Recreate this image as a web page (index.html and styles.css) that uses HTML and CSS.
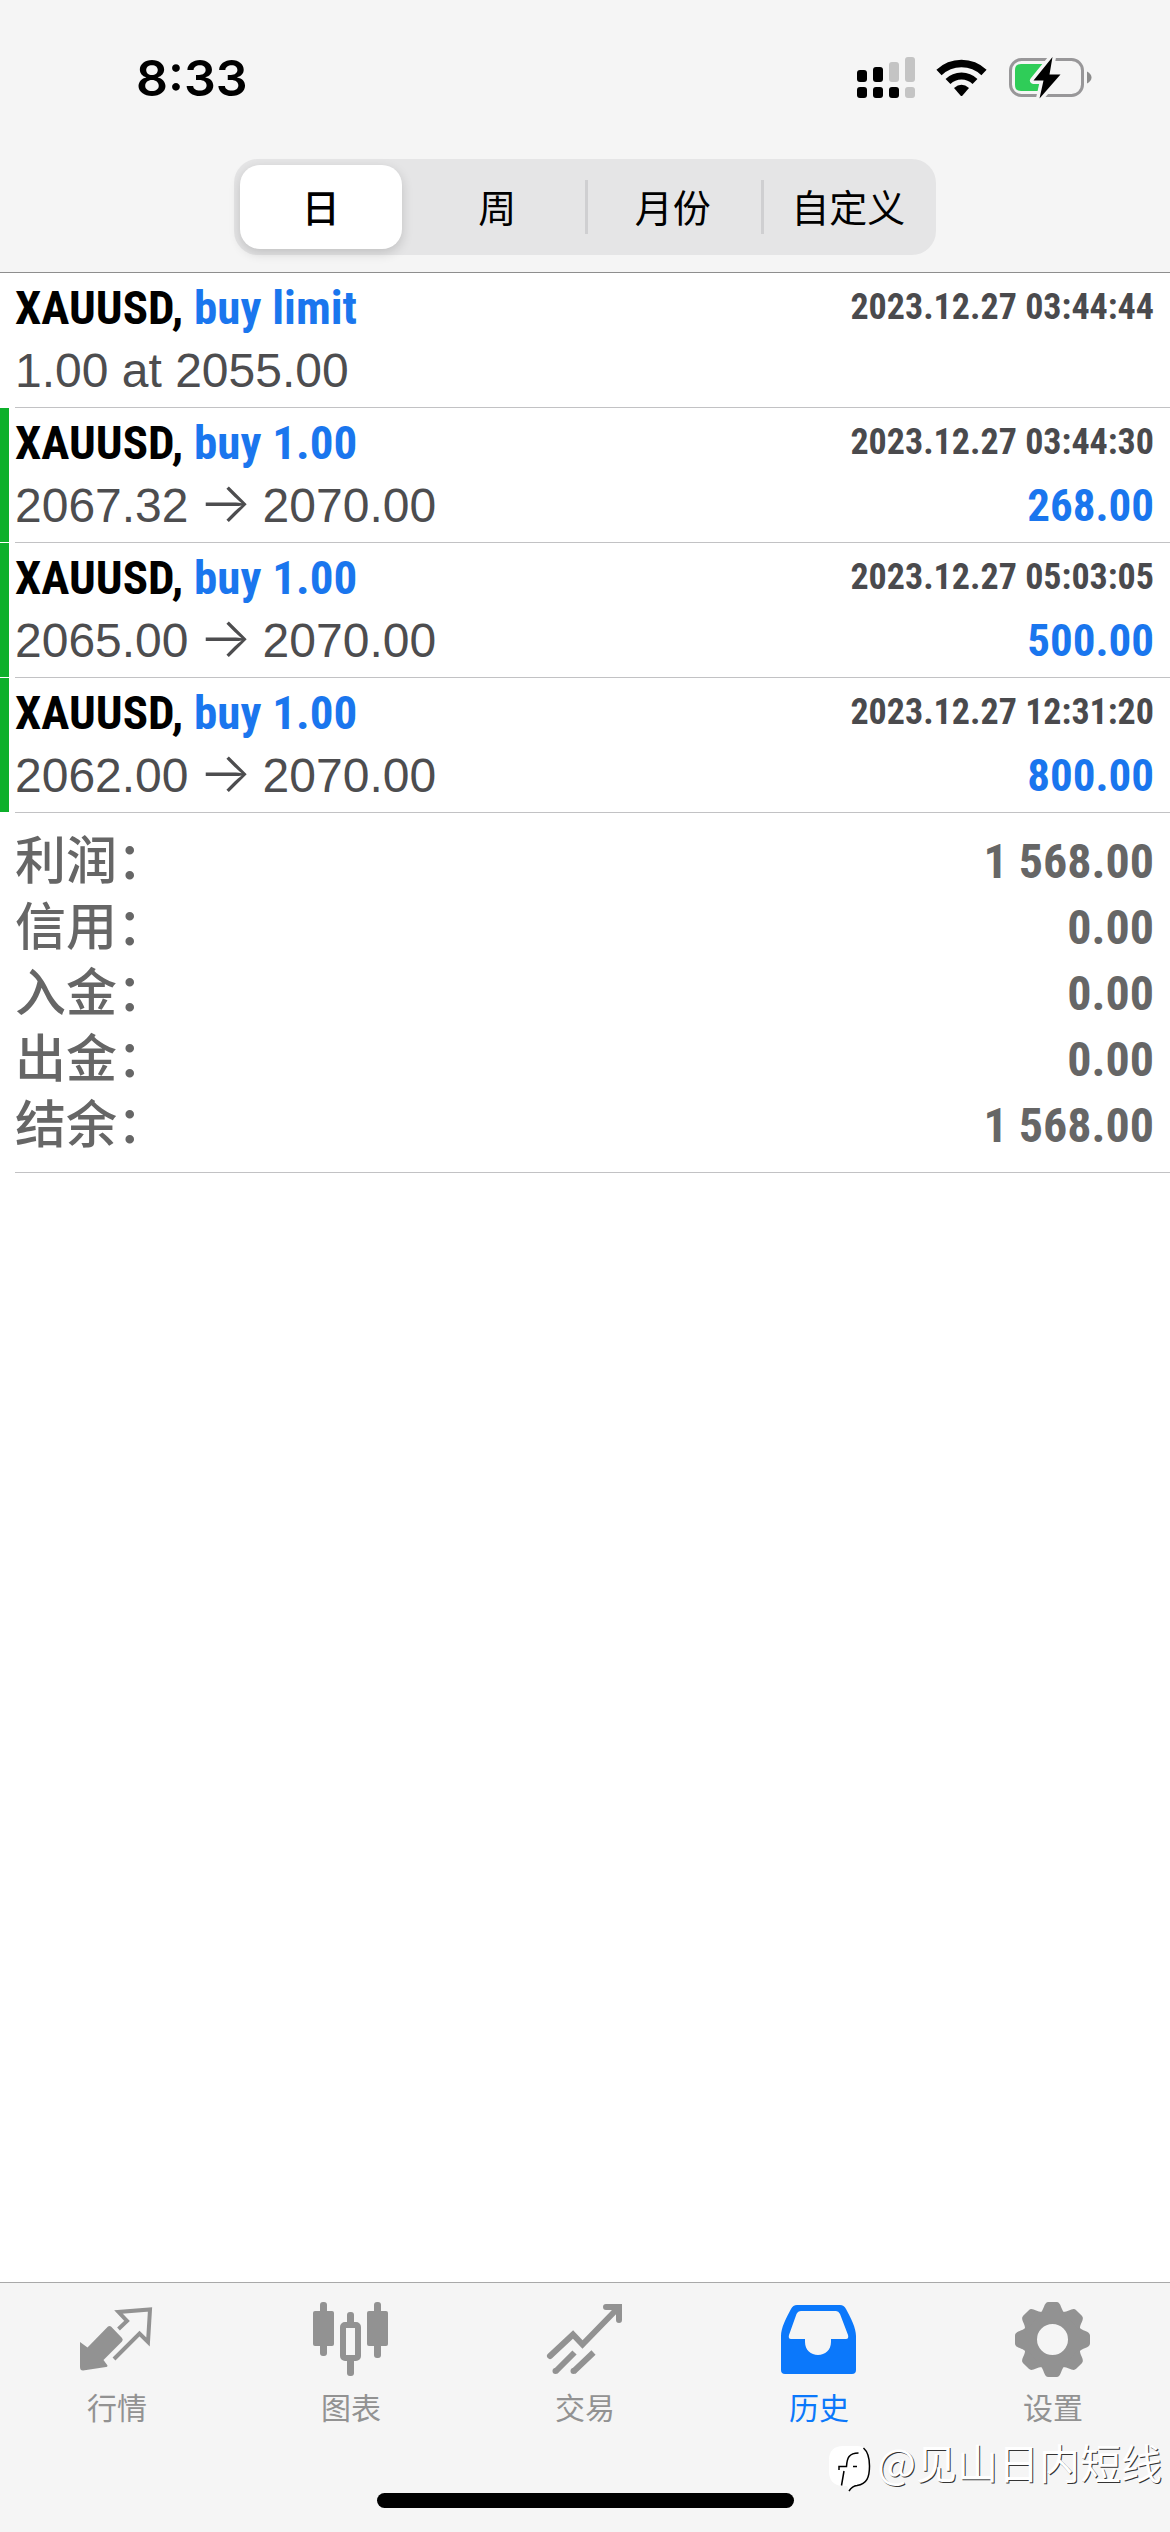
FILE: index.html
```html
<!DOCTYPE html>
<html lang="zh-CN">
<head>
  <meta charset="UTF-8">
  <meta name="viewport" content="width=device-width, initial-scale=1">
  <title>历史</title>
  <link rel="stylesheet" href="styles.css">
</head>
<body>

<header class="header">
  <div class="status">
    <span class="time">8:33</span>
    <div class="status-icons">
      <svg width="60" height="42" viewBox="0 0 60 42">
        <rect x="1" y="13" width="10" height="12" rx="3"/>
        <rect x="17" y="10" width="10" height="15" rx="3"/>
        <rect x="33" y="5" width="10" height="20" rx="3" fill="#c4c4c4"/>
        <rect x="49" y="0" width="10" height="25" rx="3" fill="#c4c4c4"/>
        <rect x="1" y="30" width="10" height="11" rx="3"/>
        <rect x="17" y="30" width="10" height="11" rx="3"/>
        <rect x="33" y="30" width="10" height="11" rx="3"/>
        <rect x="49" y="30" width="10" height="11" rx="3" fill="#c4c4c4"/>
      </svg>
      <svg width="52" height="40" viewBox="0 0 52 40">
        <path d="M3 14.5A32.6 32.6 0 0 1 48 14.5" fill="none" stroke="#000" stroke-width="7.5"/>
        <path d="M12 23.5A19.3 19.3 0 0 1 39 23.5" fill="none" stroke="#000" stroke-width="7"/>
        <path d="M18 30Q25.5 23.500 33 30L26.500 37.500Q25.500 38.500 24.500 37.500Z"/>
      </svg>
      <svg width="84" height="44" viewBox="0 0 84 44">
        <rect x="2.500" y="3.500" width="72" height="36" rx="11" fill="none" stroke="#989799" stroke-width="3"/>
        <path d="M79 15.500Q83.500 18 83.500 21.500T79 27.500Z" fill="#8c8c8c"/>
        <path d="M13 8H38L30 35H13Q7 35 7 29V14Q7 8 13 8Z" fill="#2fcd58"/>
        <path d="M44.500 1L25.500 24.500H35.500L31.500 42.500L52.500 18.500H41.500Z" fill="#000" stroke="#f5f5f5" stroke-width="7" stroke-linejoin="round" paint-order="stroke"/>
      </svg>
    </div>
  </div>
  <nav class="segmented">
    <button class="segment active" type="button">日</button>
    <button class="segment" type="button">周</button>
    <button class="segment divided" type="button">月份</button>
    <button class="segment divided" type="button">自定义</button>
  </nav>
</header>

<main class="content">
  <ul class="deals">
    <li class="deal">
      <div class="deal-body">
        <div class="line">
          <span class="symbol">XAUUSD, <span class="side">buy limit</span></span>
          <time class="date">2023.12.27 03:44:44</time>
        </div>
        <div class="line">
          <span class="price">1.00 at 2055.00</span>
        </div>
      </div>
    </li>
    <li class="deal closed">
      <div class="deal-body">
        <div class="line">
          <span class="symbol">XAUUSD, <span class="side">buy 1.00</span></span>
          <time class="date">2023.12.27 03:44:30</time>
        </div>
        <div class="line">
          <span class="price">2067.32 <span class="arrow">→</span> 2070.00</span>
          <span class="profit">268.00</span>
        </div>
      </div>
    </li>
    <li class="deal closed">
      <div class="deal-body">
        <div class="line">
          <span class="symbol">XAUUSD, <span class="side">buy 1.00</span></span>
          <time class="date">2023.12.27 05:03:05</time>
        </div>
        <div class="line">
          <span class="price">2065.00 <span class="arrow">→</span> 2070.00</span>
          <span class="profit">500.00</span>
        </div>
      </div>
    </li>
    <li class="deal closed">
      <div class="deal-body">
        <div class="line">
          <span class="symbol">XAUUSD, <span class="side">buy 1.00</span></span>
          <time class="date">2023.12.27 12:31:20</time>
        </div>
        <div class="line">
          <span class="price">2062.00 <span class="arrow">→</span> 2070.00</span>
          <span class="profit">800.00</span>
        </div>
      </div>
    </li>
  </ul>

  <dl class="summary">
    <div class="total"><dt>利润：</dt><dd>1 568.00</dd></div>
    <div class="total"><dt>信用：</dt><dd>0.00</dd></div>
    <div class="total"><dt>入金：</dt><dd>0.00</dd></div>
    <div class="total"><dt>出金：</dt><dd>0.00</dd></div>
    <div class="total"><dt>结余：</dt><dd>1 568.00</dd></div>
  </dl>
</main>

<footer class="footer">
  <nav class="tabs">
    <a class="tab" href="#quotes">
      <svg class="tab-icon" viewBox="0 0 80 80">
        <path d="M3 44L10.500 49.500L31 28.500Q32.500 27.500 34 28.500L45 40Q46.500 41.700 45 43.500L26.500 62L30.500 67.500Q30.500 69 29 69L6 72.500Q3 72.500 3 69Z" fill="currentColor"/>
        <path d="M41.500 31L50 23L41.500 14L73 11.500L71 44L62.500 35.500L37 61" fill="none" stroke="currentColor" stroke-width="4"/>
      </svg>
      行情
    </a>
    <a class="tab" href="#charts">
      <svg class="tab-icon" viewBox="0 0 80 80" fill="currentColor">
        <rect x="2" y="13" width="21" height="35" rx="2"/>
        <rect x="9" y="4" width="7" height="54" rx="3"/>
        <rect x="56" y="13" width="21" height="35" rx="2"/>
        <rect x="63" y="4" width="7" height="56" rx="3"/>
        <rect x="36" y="14" width="7" height="14" rx="3"/>
        <rect x="36" y="58" width="7" height="20" rx="3"/>
        <rect x="32" y="27" width="15" height="33" rx="2" fill="none" stroke="currentColor" stroke-width="6"/>
      </svg>
      图表
    </a>
    <a class="tab" href="#trade">
      <svg class="tab-icon" viewBox="0 0 80 80" fill="none" stroke="currentColor" stroke-width="6">
        <path d="M5 58L28 36.500L37.500 46.500L73 10M61 9H74V22" stroke-linecap="round"/>
        <path d="M10.500 73.500L29.500 54.500M28.500 73.500L48.500 54.500"/>
        <circle cx="10.500" cy="73" r="3" fill="currentColor" stroke="none"/>
        <circle cx="28.500" cy="73" r="3" fill="currentColor" stroke="none"/>
      </svg>
      交易
    </a>
    <a class="tab current" href="#history">
      <svg class="tab-icon" viewBox="0 0 80 80">
        <path fill="currentColor" fill-rule="evenodd" d="M18 7H61Q65 7 67 11C72 20 77 30 77 38V72Q77 76 73 76H6Q2 76 2 72V38C2 30 7 20 12 11Q14 7 18 7ZM22 13Q19 13 17.500 16L10 37Q9 41 12 41H26V44C26 52 32 57 39 57S52 52 52 44V41H67Q70 41 69 37L61 16Q59.500 13 57 13Z"/>
      </svg>
      历史
    </a>
    <a class="tab" href="#settings">
      <svg class="tab-icon" viewBox="0 0 80 80">
        <circle cx="39.500" cy="41.500" r="22.500" fill="none" stroke="currentColor" stroke-width="14"/>
        <g fill="currentColor" transform="translate(39.500 41.500)">
          <path id="tooth" d="M-13 -26C-8 -29 -9 -37.500 -4 -37.500H4C9 -37.500 8 -29 13 -26Z"/>
          <use href="#tooth" transform="rotate(45)"/>
          <use href="#tooth" transform="rotate(90)"/>
          <use href="#tooth" transform="rotate(135)"/>
          <use href="#tooth" transform="rotate(180)"/>
          <use href="#tooth" transform="rotate(225)"/>
          <use href="#tooth" transform="rotate(270)"/>
          <use href="#tooth" transform="rotate(315)"/>
        </g>
      </svg>
      设置
    </a>
  </nav>
  <div class="home-bar"></div>
  <div class="watermark">
    <svg width="46" height="50" viewBox="0 0 46 50">
      <path d="M16 3H30C38 3 42 9 42 17V28C42 38 37 42 29 43L22 47L20 43H15C6 42 2 37 2 28V17C2 8 7 3 16 3Z" fill="#fff"/>
      <path d="M36.500 5C41 9 42.500 15 42.500 23C42.500 34 40 41 30 42.500C26 43 24 45 22 48" fill="none" stroke="#000" stroke-width="1.500"/>
      <path d="M31.500 10C22 10 20 15 19.500 23.500H12V27M26 23.500H30M17 28L14.500 42.500" fill="none" stroke="#000" stroke-width="1.500"/>
    </svg>
    <span>@见山日内短线</span>
  </div>
</footer>

</body>
</html>
```

FILE: styles.css
```css
* {
  box-sizing: border-box;
}

body {
  margin: 0;
  min-height: 100vh;
  display: flex;
  flex-direction: column;
  background: #fff;
  color: #000;
  font-family: "Liberation Sans", "Noto Sans CJK SC", sans-serif;
}

/* top bar */
.header {
  background: #f5f5f5;
  border-bottom: 1px solid #8e8e8e;
  padding-bottom: 17px;
}

.status {
  display: flex;
  justify-content: space-between;
  align-items: center;
  height: 156px;
  padding: 0 78px 0 136px;
}

.time {
  font-family: Inter, sans-serif;
  font-weight: 600;
  font-size: 50px;
}

.status-icons {
  display: flex;
  align-items: center;
  gap: 20px;
}

.segmented {
  display: flex;
  width: 60%;
  height: 96px;
  margin: 3px auto 0;
  padding: 6px 0;
  background: #e5e5e6;
  border-radius: 24px;
}

.segment {
  width: 25%;
  border: none;
  padding: 0 0 4px;
  background: none;
  color: #000;
  font-family: "Noto Sans CJK SC", sans-serif;
  font-size: 38px;
}

.segment.active {
  width: calc(25% - 14px);
  margin: 0 8px 0 6px;
  background: #fff;
  border-radius: 20px;
  font-weight: 500;
  box-shadow: 0 4px 12px rgba(0, 0, 0, 0.16);
}

.segment.divided {
  background: linear-gradient(#cfcfd1, #cfcfd1) left center / 3px 54px no-repeat;
}

/* deals */
.content {
  flex: 1;
}

.deals {
  list-style: none;
  margin: 0;
  padding: 0;
}

.deal {
  height: 134px;
  margin-bottom: 1px;
  border-left: 9px solid transparent;
  padding-left: 6px;
}

.deal.closed {
  border-left-color: #0db02b;
}

.deal-body {
  height: 134px;
  padding: 3px 16px 0 0;
  box-shadow: 0 1px #c2c2c4;
}

.line {
  display: flex;
  justify-content: space-between;
  height: 63px;
  line-height: 63px;
  white-space: nowrap;
}

.symbol,
.profit,
.date,
.total dd {
  font-family: "Roboto Condensed", Roboto, sans-serif;
  font-weight: bold;
}

.symbol {
  font-size: 47px;
}

.profit {
  font-size: 45px;
}

.side,
.profit {
  color: #1a76ee;
}

.date {
  color: #4a4a4d;
  font-size: 36px;
}

.price {
  color: #4d4d4f;
  font-size: 48px;
}

.arrow {
  margin: 0 -3px;
  font-family: Inter, sans-serif;
  font-size: 56px;
  font-weight: 300;
  line-height: 0;
}

/* totals */
.summary {
  margin: 0 0 0 15px;
  padding: 16px 16px 13px 0;
  border-bottom: 1px solid #c2c2c4;
  color: #666;
}

.total {
  display: flex;
  justify-content: space-between;
  height: 66px;
  line-height: 66px;
}

.total dt {
  font-weight: 500;
  font-size: 51px;
}

.total dd {
  margin: 0;
  font-size: 48px;
}

/* bottom bar */
.footer {
  position: relative;
  height: 250px;
  padding-top: 15px;
  background: #f5f5f5;
  border-top: 1px solid #a9a9a9;
}

.tabs {
  display: flex;
}

.tab {
  flex: 1;
  display: flex;
  flex-direction: column;
  align-items: center;
  color: #929292;
  font-family: "Noto Sans CJK SC", sans-serif;
  font-size: 30px;
  line-height: 56px;
  text-decoration: none;
}

.tab-icon {
  width: 80px;
  height: 80px;
}

.tab.current {
  color: #0b78fb;
}

.home-bar {
  width: 36%;
  max-width: 417px;
  height: 15px;
  margin: 59px auto 0;
  border-radius: 8px;
  background: #000;
}

.watermark {
  position: absolute;
  right: 8px;
  bottom: 39px;
  display: flex;
  align-items: flex-end;
  gap: 4px;
  color: #fff;
  font-family: "Noto Sans CJK SC", sans-serif;
  font-size: 41px;
  line-height: 64px;
  text-shadow: 1px 1px 0 #333;
}
```
